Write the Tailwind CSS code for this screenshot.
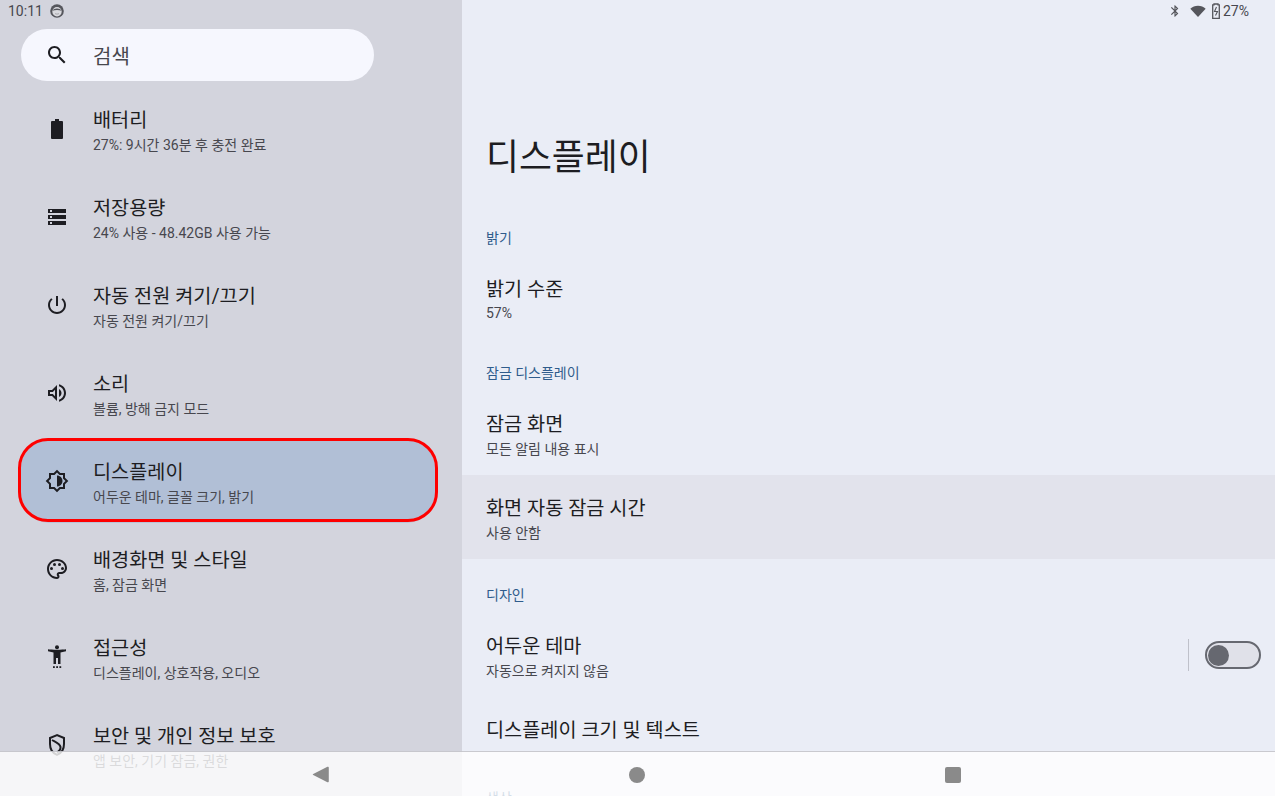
<!DOCTYPE html>
<html lang="ko">
<head>
<meta charset="UTF-8">
<meta name="viewport" content="width=device-width, initial-scale=1.0">
<script src="https://cdn.jsdelivr.net/npm/@tailwindcss/browser@4"></script>
<title>디스플레이</title>
</head>
<body class="font-['Roboto','Noto_Sans_CJK_KR',sans-serif] bg-[#eaedf6]">
<div class="relative w-[1275px] h-[796px] overflow-hidden flex">

    <!-- settings list -->
    <div class="w-[462px] h-full shrink-0 bg-[#d3d4dd] flex flex-col">
        <div class="h-[29px] shrink-0"></div>
        <div class="ml-[21px] w-[353px] h-[52px] shrink-0 rounded-full bg-[#f6f7fe] flex items-center pl-[24px]">
            <svg class="w-[24px] h-[24px] text-[#1d1d22]" viewBox="0 0 24 24" fill="currentColor"><path d="M15.5 14h-.79l-.28-.27C15.41 12.59 16 11.11 16 9.5 16 5.91 13.09 3 9.5 3S3 5.91 3 9.5 5.91 16 9.5 16c1.61 0 3.09-.59 4.23-1.57l.27.28v.79l5 4.99L20.49 19l-4.99-5zm-6 0C7.01 14 5 11.99 5 9.5S7.01 5 9.5 5 14 7.01 14 9.5 11.99 14 9.5 14z"/></svg>
            <span class="ml-[24px] mt-[3px] text-[20px] leading-none text-[#47474e]">검색</span>
        </div>
        <div class="h-[7px] shrink-0"></div>

        <div class="flex flex-col gap-[8px] ml-[21px] w-[414px]">
            <div class="h-[80px] shrink-0 flex items-center pl-[24px] rounded-[28px]">
                <svg class="w-[24px] h-[24px] mt-[2px] text-[#1d1d22]" viewBox="0 0 24 24" fill="currentColor"><path d="M14 2h-4v2H7a1 1 0 0 0-1 1v16a1 1 0 0 0 1 1h10a1 1 0 0 0 1-1V5a1 1 0 0 0-1-1h-3z"/></svg>
                <div class="ml-[24px] mt-[8px]">
                    <div class="pt-[4px] text-[19.7px] leading-[22px] text-[#1d1d22]">배터리</div>
                    <div class="text-[14px] leading-[26px] text-[#47474e]">27%: 9시간 36분 후 충전 완료</div>
                </div>
            </div>
            <div class="h-[80px] shrink-0 flex items-center pl-[24px] rounded-[28px]">
                <svg class="w-[24px] h-[24px] mt-[2px] text-[#1d1d22]" viewBox="0 0 24 24" fill="currentColor"><path d="M3 20h18v-4H3v4zm2-3h2v2H5v-2zM3 4v4h18V4H3zm4 3H5V5h2v2zm-4 7h18v-4H3v4zm2-3h2v2H5v-2z"/></svg>
                <div class="ml-[24px] mt-[8px]">
                    <div class="pt-[4px] text-[19.7px] leading-[22px] text-[#1d1d22]">저장용량</div>
                    <div class="text-[14px] leading-[26px] text-[#47474e]">24% 사용 - 48.42GB 사용 가능</div>
                </div>
            </div>
            <div class="h-[80px] shrink-0 flex items-center pl-[24px] rounded-[28px]">
                <svg class="w-[24px] h-[24px] mt-[2px] text-[#1d1d22]" viewBox="0 0 24 24" fill="currentColor"><path d="M13 3h-2v10h2V3zm4.830 2.170l-1.420 1.420C17.990 7.860 19 9.810 19 12c0 3.870-3.130 7-7 7s-7-3.130-7-7c0-2.190 1.010-4.140 2.580-5.420L6.170 5.170C4.230 6.820 3 9.260 3 12c0 4.970 4.030 9 9 9s9-4.030 9-9c0-2.740-1.230-5.180-3.170-6.830z"/></svg>
                <div class="ml-[24px] mt-[8px]">
                    <div class="pt-[4px] text-[19.7px] leading-[22px] text-[#1d1d22]">자동 전원 켜기/끄기</div>
                    <div class="text-[14px] leading-[26px] text-[#47474e]">자동 전원 켜기/끄기</div>
                </div>
            </div>
            <div class="h-[80px] shrink-0 flex items-center pl-[24px] rounded-[28px]">
                <svg class="w-[24px] h-[24px] mt-[2px] text-[#1d1d22]" viewBox="0 0 24 24" fill="currentColor"><path d="M3 9v6h4l5 5V4L7 9H3zm7-.17v6.34L7.83 13H5v-2h2.83L10 8.83zM16.5 12c0-1.77-1.02-3.29-2.5-4.03v8.05c1.48-.73 2.5-2.25 2.5-4.02zM14 3.23v2.06c2.89.86 5 3.54 5 6.71s-2.11 5.85-5 6.71v2.06c4.01-.91 7-4.49 7-8.77 0-4.28-2.99-7.86-7-8.77z"/></svg>
                <div class="ml-[24px] mt-[8px]">
                    <div class="pt-[4px] text-[19.7px] leading-[22px] text-[#1d1d22]">소리</div>
                    <div class="text-[14px] leading-[26px] text-[#47474e]">볼륨, 방해 금지 모드</div>
                </div>
            </div>
            <div class="relative h-[80px] shrink-0 flex items-center pl-[24px] rounded-[28px] bg-[#b1bfd6] shadow-[0_3px_0_#b9c4d8]">
                <div class="absolute -inset-x-[3px] -inset-y-[2px] rounded-[30px] border-[3px] border-[#fe0000]"></div>
                <svg class="w-[24px] h-[24px] mt-[2px] text-[#1d1d22]" viewBox="0 0 24 24" fill="currentColor"><path d="M20 15.31L23.31 12 20 8.69V4h-4.69L12 .69 8.69 4H4v4.69L.69 12 4 15.31V20h4.69L12 23.31 15.31 20H20v-4.69zm-2-.83V18h-3.52L12 20.48 9.52 18H6v-3.52L3.52 12 6 9.52V6h3.52L12 3.52 14.48 6H18v3.52L20.48 12 18 14.48zM12 6.5v11c3.03 0 5.5-2.47 5.5-5.5S15.03 6.5 12 6.5z"/></svg>
                <div class="ml-[24px] mt-[8px]">
                    <div class="pt-[4px] text-[19.7px] leading-[22px] text-[#1d1d22]">디스플레이</div>
                    <div class="text-[14px] leading-[26px] text-[#47474e]">어두운 테마, 글꼴 크기, 밝기</div>
                </div>
            </div>
            <div class="h-[80px] shrink-0 flex items-center pl-[24px] rounded-[28px]">
                <svg class="w-[24px] h-[24px] mt-[2px] text-[#1d1d22]" viewBox="0 0 24 24" fill="currentColor"><path d="M12 22C6.49 22 2 17.51 2 12S6.49 2 12 2s10 4.04 10 9c0 3.31-2.69 6-6 6h-1.77c-.28 0-.5.22-.5.5 0 .12.05.23.13.33.41.47.64 1.06.64 1.67 0 1.38-1.12 2.5-2.5 2.5zm0-18c-4.41 0-8 3.59-8 8s3.59 8 8 8c.28 0 .5-.22.5-.5 0-.16-.08-.28-.14-.35-.41-.46-.63-1.05-.63-1.65 0-1.38 1.12-2.5 2.5-2.5H16c2.21 0 4-1.79 4-4 0-3.86-3.59-7-8-7z"/><circle cx="6.5" cy="11.5" r="1.5"/><circle cx="9.5" cy="7.5" r="1.5"/><circle cx="14.5" cy="7.5" r="1.5"/><circle cx="17.5" cy="11.5" r="1.5"/></svg>
                <div class="ml-[24px] mt-[8px]">
                    <div class="pt-[4px] text-[19.7px] leading-[22px] text-[#1d1d22]">배경화면 및 스타일</div>
                    <div class="text-[14px] leading-[26px] text-[#47474e]">홈, 잠금 화면</div>
                </div>
            </div>
            <div class="h-[80px] shrink-0 flex items-center pl-[24px] rounded-[28px]">
                <svg class="w-[24px] h-[24px] mt-[2px] text-[#1d1d22]" viewBox="0 0 24 24" fill="currentColor"><circle cx="12" cy="2.200" r="2"/><path d="M3 4.300c3 .6 15 .6 18 0v1.900l-5.500 1.200V19H13v-6h-2v6H8.500V7.400L3 6.200z"/><rect x="8" y="21.200" width="1.800" height="1.800"/><rect x="11.200" y="21.200" width="1.800" height="1.800"/><rect x="14.400" y="21.200" width="1.800" height="1.800"/></svg>
                <div class="ml-[24px] mt-[8px]">
                    <div class="pt-[4px] text-[19.7px] leading-[22px] text-[#1d1d22]">접근성</div>
                    <div class="text-[14px] leading-[26px] text-[#47474e]">디스플레이, 상호작용, 오디오</div>
                </div>
            </div>
            <div class="h-[80px] shrink-0 flex items-center pl-[24px] rounded-[28px]">
                <svg class="w-[24px] h-[24px] mt-[2px] text-[#1d1d22]" viewBox="0 0 24 24" fill="none" stroke="currentColor" stroke-width="2"><path d="M12 2.100L5 5v6.100c0 5 2.800 9.300 7 10.800 4.200-1.500 7-5.800 7-10.800V5z"/><path d="M7 7c3 1.800 8 3.500 8.500 7 .2 2-1 4-3.500 5.500"/></svg>
                <div class="ml-[24px] mt-[8px]">
                    <div class="pt-[4px] text-[19.7px] leading-[22px] text-[#1d1d22]">보안 및 개인 정보 보호</div>
                    <div class="text-[14px] leading-[26px] text-[#47474e]">앱 보안, 기기 잠금, 권한</div>
                </div>
            </div>
        </div>
    </div>

    <!-- display settings -->
    <div class="flex-1 h-full flex flex-col">
        <div class="h-[132px] shrink-0"></div>
        <div class="h-[52px] shrink-0 pl-[24px] text-[35.8px] leading-[52px] text-[#1d1d22]">디스플레이</div>
        <div class="h-[42px] shrink-0"></div>

        <div class="h-[24px] shrink-0 pl-[24px] text-[14px] leading-[24px] text-[#2f5c8c]">밝기</div>
        <div class="h-[111px] shrink-0 pt-[25px] pl-[24px]">
            <div class="pt-[4px] text-[19.7px] leading-[22px] text-[#1d1d22]">밝기 수준</div>
            <div class="text-[14px] leading-[24px] text-[#47474e]">57%</div>
        </div>

        <div class="h-[24px] shrink-0 pl-[24px] text-[14px] leading-[24px] text-[#2f5c8c]">잠금 디스플레이</div>
        <div class="h-[90px] shrink-0 pt-[25px] pl-[24px]">
            <div class="pt-[3px] text-[19.7px] leading-[23px] text-[#1d1d22]">잠금 화면</div>
            <div class="text-[14px] leading-[26px] text-[#47474e]">모든 알림 내용 표시</div>
        </div>
        <div class="h-[84px] shrink-0 pt-[19px] pl-[24px] bg-[#e2e3ec]">
            <div class="pt-[4px] text-[19.7px] leading-[22px] text-[#1d1d22]">화면 자동 잠금 시간</div>
            <div class="text-[14px] leading-[26px] text-[#47474e]">사용 안함</div>
        </div>
        <div class="h-[24px] shrink-0 mt-[24px] pl-[24px] text-[14px] leading-[24px] text-[#2f5c8c]">디자인</div>
        <div class="h-[96px] shrink-0 flex items-center pl-[24px] pr-[14px]">
            <div class="flex-1 mt-[6px]">
                <div class="pt-[4px] text-[19.7px] leading-[22px] text-[#1d1d22]">어두운 테마</div>
                <div class="text-[14px] leading-[26px] text-[#47474e]">자동으로 켜지지 않음</div>
            </div>
            <div class="w-px h-[32px] bg-[#bfc1ca] mr-[16px]"></div>
            <div class="w-[56px] h-[28px] rounded-full border-2 border-[#666870] bg-[#e0e1e9] flex items-center pl-[1px]">
                <div class="w-[21px] h-[21px] rounded-full bg-[#666870]"></div>
            </div>
        </div>
        <div class="pl-[24px] pt-[15px] text-[19.7px] leading-[26px] text-[#1d1d22]">디스플레이 크기 및 텍스트</div>
        <div class="pl-[24px] pt-[42px] text-[14px] leading-[24px] text-[#2f5c8c]">색상</div>
    </div>

    <!-- status bar -->
    <div class="absolute top-0 inset-x-0 h-[22px] flex items-center text-[14px] text-[#47474e] pl-[8px] pr-[26px]">
        <span class="leading-none">10:11</span>
        <svg class="ml-[7px] w-[14px] h-[14px]" viewBox="0 0 14 14"><circle cx="7" cy="7" r="6.800" fill="#55565c"/><circle cx="7" cy="7.800" r="4.700" fill="#d9d9de"/><path d="M2.500 6.800C4 3.800 10 3.800 11.500 6.800 9 5.800 5 5.800 2.500 6.800z" fill="#55565c"/><path d="M5 9.500c1 .8 3 .8 4 0" fill="none" stroke="#9a9aa0" stroke-width=".8"/></svg>
        <svg class="ml-auto w-[14px] h-[14px]" viewBox="0 0 24 24" fill="#55565c"><path d="M17.71 7.71L12 2h-1v7.59L6.41 5 5 6.41 10.59 12 5 17.59 6.41 19 11 14.41V22h1l5.71-5.71-4.3-4.29 4.3-4.29zM13 5.83l1.88 1.88L13 9.59V5.83zm1.88 10.46L13 18.170v-3.760l1.880 1.880z"/></svg>
        <svg class="ml-[8px] w-[16px] h-[16px]" viewBox="0 0 24 24" fill="#55565c"><path d="M12 21L0.500 8.500C3.500 5.500 7.500 4 12 4s8.500 1.500 11.500 4.500z"/></svg>
        <svg class="ml-[4px] w-[12px] h-[16px]" viewBox="0 0 12 16" fill="none" stroke="#55565c" stroke-width="1.300"><path d="M4 1.800V1h4v.8h1.300v13.500H2.700V1.800z"/><path d="M6.500 4L4.500 8.500h3L5.500 12.500" stroke-width="1.100"/></svg>
        <span class="ml-[1px] leading-none">27%</span>
    </div>

    <!-- navigation bar -->
    <div class="absolute bottom-0 inset-x-0 h-[45px] bg-white/80 border-t border-[#a8a8b0]/60">
        <svg class="absolute left-[311px] top-[14px] w-[20px] h-[17px]" viewBox="0 0 18 18" preserveAspectRatio="none" fill="#8a8a8a"><path d="M16 1.500v15a.8.8 0 0 1-1.200.6L2 9.600a.7.7 0 0 1 0-1.200L14.800.900A.8.800 0 0 1 16 1.500z"/></svg>
        <div class="absolute left-[629px] top-[15px] w-[16px] h-[16px] rounded-full bg-[#8a8a8a]"></div>
        <div class="absolute left-[945px] top-[15px] w-[16px] h-[16px] rounded-[2px] bg-[#8a8a8a]"></div>
    </div>
</div>
</body>
</html>
